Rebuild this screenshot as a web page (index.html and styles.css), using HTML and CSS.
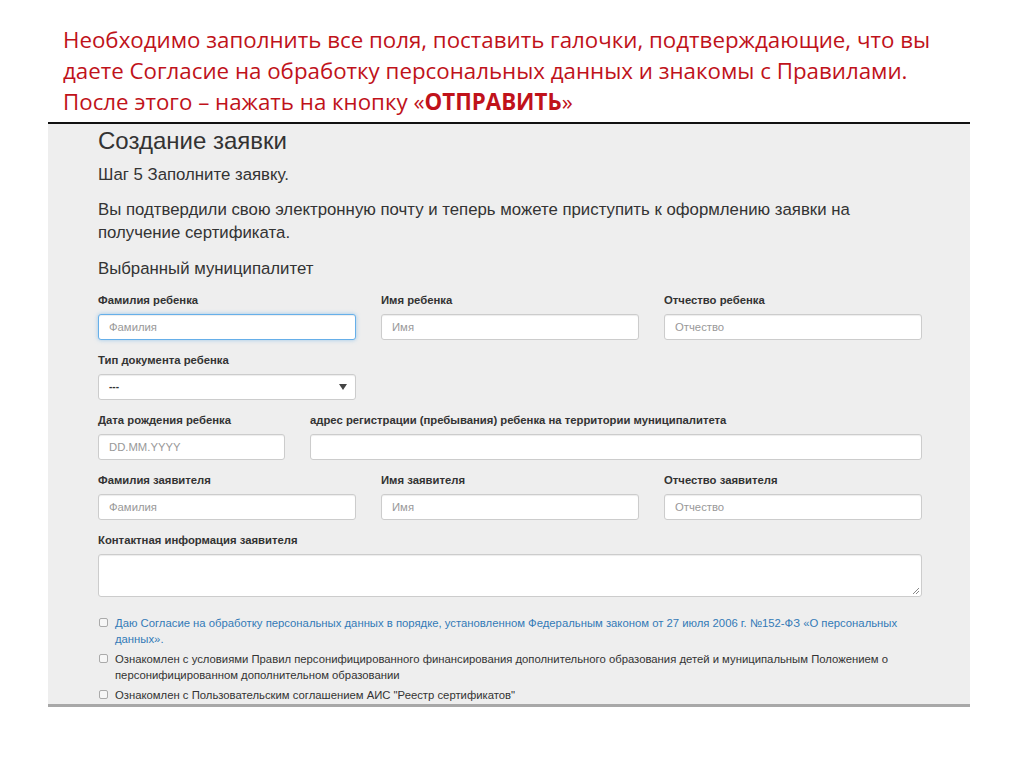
FILE: index.html
```html
<!DOCTYPE html>
<html lang="ru">
<head>
    <meta charset="UTF-8">
    <title>Создание заявки</title>
    <link rel="stylesheet" href="styles.css">
</head>
<body>
    <div class="caption">
        Необходимо заполнить все поля, поставить галочки, подтверждающие, что вы<br>
        даете Согласие на обработку персональных данных и знакомы с Правилами.<br>
        После этого – нажать на кнопку «<b>ОТПРАВИТЬ</b>»
    </div>

    <div class="shot">
        <h1>Создание заявки</h1>
        <p class="step">Шаг 5 Заполните заявку.</p>
        <p class="intro">Вы подтвердили свою электронную почту и теперь можете приступить к оформлению заявки на получение сертификата.</p>
        <p class="muni">Выбранный муниципалитет</p>

        <div class="row three">
            <div class="field">
                <label>Фамилия ребенка</label>
                <div class="input focus">Фамилия</div>
            </div>
            <div class="field">
                <label>Имя ребенка</label>
                <div class="input">Имя</div>
            </div>
            <div class="field">
                <label>Отчество ребенка</label>
                <div class="input">Отчество</div>
            </div>
        </div>

        <div class="row three">
            <div class="field">
                <label>Тип документа ребенка</label>
                <div class="input select"><span class="val">---</span><span class="arrow"></span></div>
            </div>
        </div>

        <div class="row birth">
            <div class="field">
                <label>Дата рождения ребенка</label>
                <div class="input">DD.MM.YYYY</div>
            </div>
            <div class="field">
                <label>адрес регистрации (пребывания) ребенка на территории муниципалитета</label>
                <div class="input"></div>
            </div>
        </div>

        <div class="row three">
            <div class="field">
                <label>Фамилия заявителя</label>
                <div class="input">Фамилия</div>
            </div>
            <div class="field">
                <label>Имя заявителя</label>
                <div class="input">Имя</div>
            </div>
            <div class="field">
                <label>Отчество заявителя</label>
                <div class="input">Отчество</div>
            </div>
        </div>

        <div class="row">
            <div class="field">
                <label>Контактная информация заявителя</label>
                <div class="input area">
                    <svg class="grip" width="9" height="9" viewBox="0 0 9 9"><path d="M8 2 L2 8 M8 5 L5 8" stroke="#888" stroke-width="1"/></svg>
                </div>
            </div>
        </div>

        <div class="checks">
            <div class="check">
                <span class="box"></span>
                <span class="link">Даю Согласие на обработку персональных данных в порядке, установленном Федеральным законом от 27 июля 2006 г. №152-ФЗ «О персональных данных».</span>
            </div>
            <div class="check">
                <span class="box"></span>
                <span>Ознакомлен с условиями Правил персонифицированного финансирования дополнительного образования детей и муниципальным Положением о персонифицированном дополнительном образовании</span>
            </div>
            <div class="check">
                <span class="box"></span>
                <span>Ознакомлен с Пользовательским соглашением АИС "Реестр сертификатов"</span>
            </div>
        </div>
    </div>
</body>
</html>
```

FILE: styles.css
```css
body {
    margin: 0;
    background: #ffffff;
    font-family: "Liberation Sans", Arial, sans-serif;
    color: #333333;
}

.caption {
    padding: 24px 0 0 63px;
    font-family: "Open Sans", sans-serif;
    font-size: 22.3px;
    line-height: 31px;
    color: #c0121a;
}

.caption b {
    font-weight: 700;
}

.shot {
    margin: 5px 54px 0 48px;
    height: 580px;
    overflow: hidden;
    background: #eeeeee;
    border-top: 2px solid #111111;
    border-bottom: 3px solid #a8a8a8;
    padding: 0 48px 0 50px;
}

h1 {
    margin: 3px 0 0;
    font-size: 24px;
    font-weight: normal;
    line-height: 28px;
    color: #333333;
}

.step {
    margin: 10px 0 0;
    font-size: 16.8px;
    line-height: 20px;
}

.intro {
    margin: 13px 0 0;
    font-size: 16.8px;
    line-height: 23px;
    width: 800px;
}

.muni {
    margin: 15px 0 0;
    font-size: 16.8px;
    line-height: 20px;
}

.row {
    display: grid;
    gap: 25px;
    margin-top: 13px;
}

.muni + .row {
    margin-top: 14px;
}

.three {
    grid-template-columns: 1fr 1fr 1fr;
}

.birth {
    grid-template-columns: 187px 1fr;
}

.field label {
    display: block;
    font-size: 11.3px;
    font-weight: bold;
    line-height: 14px;
    margin-bottom: 7px;
    color: #333333;
    white-space: nowrap;
}

.input {
    box-sizing: border-box;
    height: 26px;
    background: #ffffff;
    border: 1px solid #cccccc;
    border-radius: 3px;
    box-shadow: inset 0 1px 1px rgba(0, 0, 0, 0.075);
    padding: 0 10px;
    font-size: 11.3px;
    line-height: 24px;
    color: #999999;
}

.input.focus {
    border-color: #66afe9;
    box-shadow: inset 0 1px 1px rgba(0, 0, 0, 0.075), 0 0 4px rgba(102, 175, 233, 0.6);
}

.select {
    display: flex;
    justify-content: space-between;
    align-items: center;
    color: #333333;
}

.select .val {
    font-weight: bold;
    font-size: 10px;
}

.arrow {
    width: 0;
    height: 0;
    border-left: 4px solid transparent;
    border-right: 4px solid transparent;
    border-top: 6px solid #444444;
    margin-right: -2px;
}

.area {
    position: relative;
    height: 43px;
}

.grip {
    position: absolute;
    right: 1px;
    bottom: 1px;
}

.checks {
    margin-top: 18px;
    font-size: 11.3px;
    line-height: 16px;
}

.check {
    display: flex;
    gap: 7px;
    margin-bottom: 4px;
}

.box {
    flex: none;
    box-sizing: border-box;
    width: 9px;
    height: 9px;
    margin: 3px 0 0 1px;
    background: #f6f6f6;
    border: 1px solid #aaaaaa;
    border-radius: 2px;
}

.link {
    color: #337ab7;
}
```
